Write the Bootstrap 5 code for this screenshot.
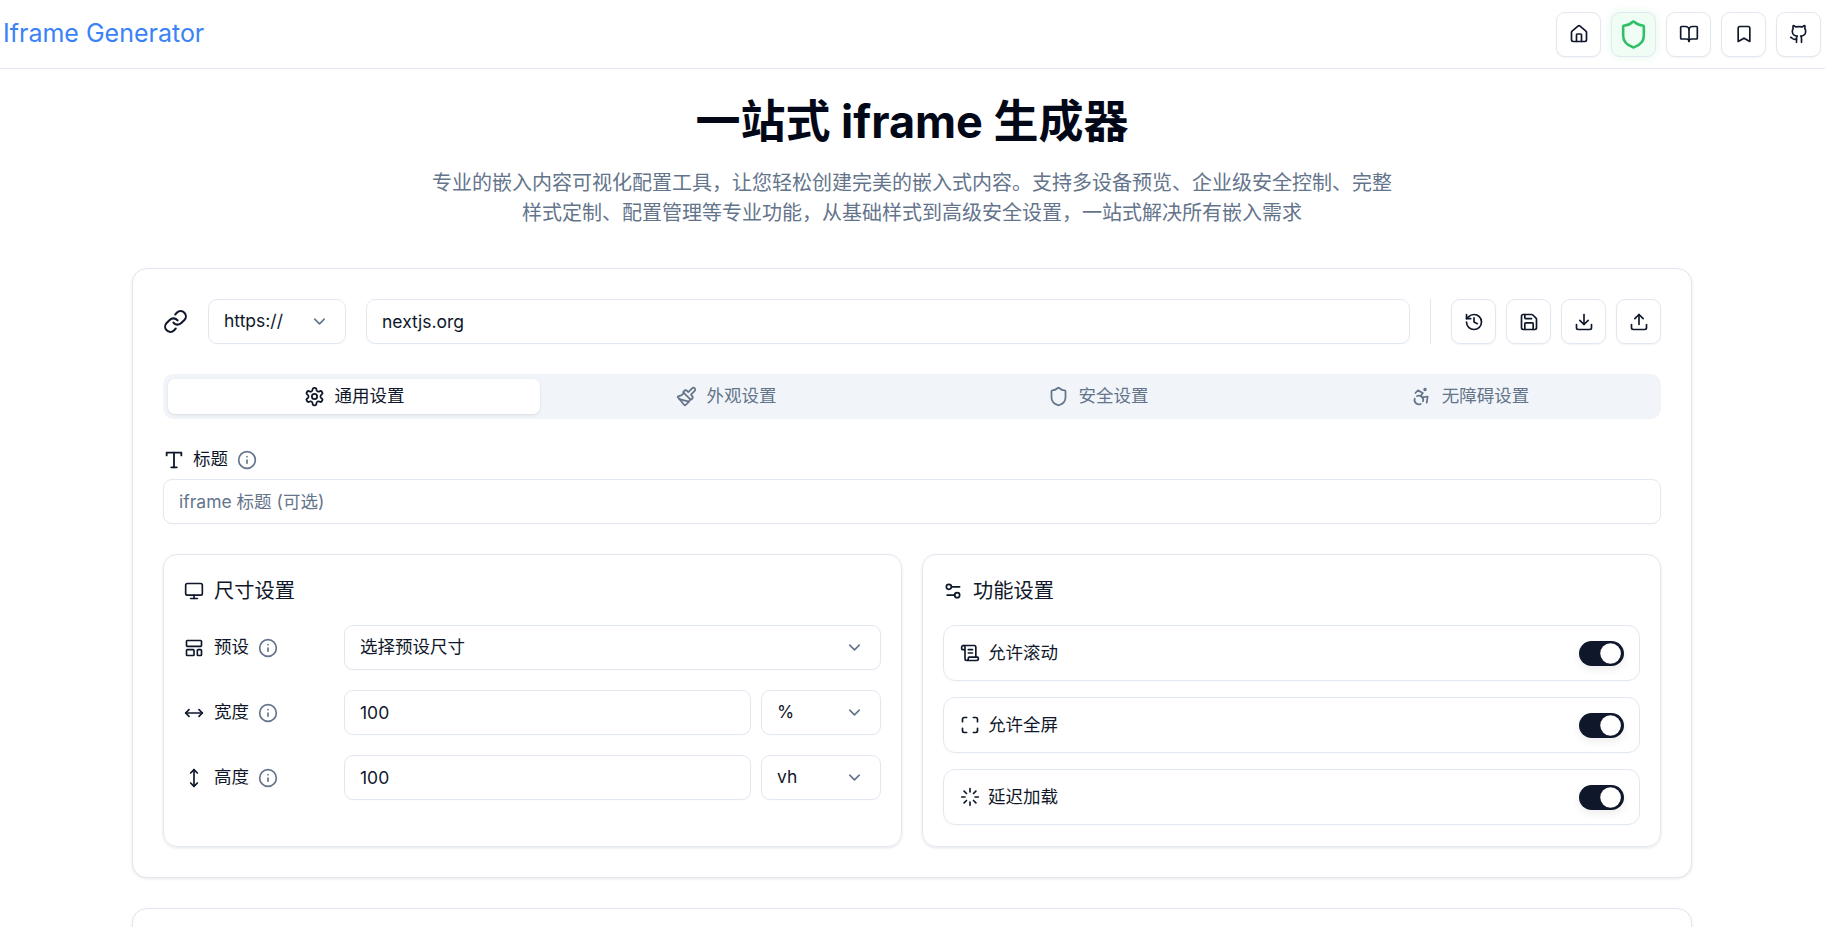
<!DOCTYPE html>
<html lang="zh-CN">
<head>
    <meta charset="UTF-8">
    <meta name="viewport" content="width=device-width, initial-scale=1.0">
    <title>Iframe Generator</title>
    <link rel="stylesheet" href="https://cdn.jsdelivr.net/npm/bootstrap@5.3.0/dist/css/bootstrap.min.css">
    <style>
        html, body { height: 100%; overflow: hidden; }
        body { font-family: "Inter", "Noto Sans CJK SC", sans-serif; font-size: 17.5px; color: #0f172a; background: #fff; }
        .ico { width: 20px; height: 20px; flex: none; fill: none; stroke: currentColor; stroke-width: 2; stroke-linecap: round; stroke-linejoin: round; }
        .ico-gap { margin-right: 10px; }
        .ico-tab { width: 21px; height: 21px; }
        .ico-md { width: 22px; height: 22px; }
        .ico-link { width: 25px; height: 25px; }
        .ico-shield { width: 31px; height: 31px; color: #2fbf67; }
        .ico-info { width: 20px; height: 20px; margin-left: 9px; color: #64748b; }

        .top-bar { height: 69px; padding: 0 4px 0 3px; background: #fff; border-bottom: 1px solid #e2e8f0; }
        .brand-name { font-size: 25px; color: #3b82f6; padding: 0; margin: 0; }
        .icon-row { gap: 10px; }
        .icon-btn { width: 45px; height: 45px; padding: 0; flex: none; display: flex; align-items: center; justify-content: center; color: #0f172a; background: #fff; border: 1px solid #e2e8f0; border-radius: 9px; box-shadow: 0 1px 2px rgba(0,0,0,.05); }
        .icon-btn-safe { background: #f0fdf4; box-shadow: 0 0 10px rgba(34,197,94,.12); }

        .page-wrap { width: 1560px; margin: 0 0 0 132px; }
        .page-head { padding-top: 23px; margin-bottom: 40px; }
        .page-head h1 { font-size: 45px; line-height: 60px; font-weight: 700; color: #020817; margin-bottom: 16px; }
        .page-head p { width: 972px; margin: 0 auto; font-size: 20px; line-height: 30px; color: #64748b; }

        .panel { border: 1px solid #e2e8f0; border-radius: 15px; padding: 30px; background: #fff; box-shadow: 0 1px 3px rgba(0,0,0,.1); margin-bottom: 30px; }
        .panel-next { height: 200px; }
        .url-row { gap: 20px; }
        .url-scheme { width: 138px; flex: none; }
        .url-div { width: 1px; height: 45px; background: #e2e8f0; flex: none; }

        .form-control, .form-select { height: 45px; font-size: 17.5px; color: #0f172a; border: 1px solid #e2e8f0; border-radius: 9px; padding: 0 15px; box-shadow: 0 1px 2px rgba(0,0,0,.02); }
        .form-control::placeholder { color: #64748b; }
        .form-select { background-image: url("data:image/svg+xml,%3csvg xmlns='http://www.w3.org/2000/svg' viewBox='0 0 24 24' fill='none' stroke='%2364748b' stroke-width='2' stroke-linecap='round' stroke-linejoin='round'%3e%3cpath d='m6 9 6 6 6-6'/%3e%3c/svg%3e"); background-size: 19px 19px; background-position: right 16px center; }

        .tab-strip { height: 45px; padding: 5px; margin: 30px 0 27px; background: #f1f5f9; border-radius: 10px; }
        .tab-strip .nav-link { height: 35px; display: flex; align-items: center; justify-content: center; gap: 10px; padding: 0; font-size: 17.5px; color: #64748b; border-radius: 7px; }
        .tab-strip .nav-link.active { background: #fff; color: #0f172a; box-shadow: 0 1px 3px rgba(0,0,0,.1); }

        .field-label { height: 27px; margin-bottom: 6px; }
        .inner-row { --bs-gutter-x: 20px; margin-top: 30px; }
        .sub-panel { height: 293px; border: 1px solid #e2e8f0; border-radius: 14px; padding: 22px 20px; box-shadow: 0 1px 3px rgba(0,0,0,.1); }
        .sub-title { height: 28px; margin-bottom: 20px; font-size: 20.25px; }
        .size-rows { gap: 20px; }
        .size-label { width: 150px; flex: none; }
        .size-label-first { width: 160px; }
        .unit-row { gap: 10px; }
        .unit-select { width: 120px; flex: none; }
        .feature-row { height: 56px; padding: 0 15px 0 16px; border: 1px solid #e2e8f0; border-radius: 12px; box-shadow: 0 1px 2px rgba(0,0,0,.02); }

        .form-switch { padding: 0; margin: 0; min-height: 0; height: 25px; }
        .form-switch .form-check-input { width: 45px; height: 25px; margin: 0; border: none; background-color: #0f172a; background-image: url("data:image/svg+xml,%3csvg xmlns='http://www.w3.org/2000/svg' viewBox='-4 -4 8 8'%3e%3ccircle cx='-.3' r='3.3' fill='%23fff'/%3e%3c/svg%3e"); background-position: right center; box-shadow: 0 4px 8px rgba(0,0,0,.07); }
    </style>
</head>
<body>
    <!-- lucide style icons used all over the page -->
    <svg width="0" height="0" class="position-absolute">
        <symbol id="i-home" viewBox="0 0 24 24"><path d="M15 21v-8a1 1 0 0 0-1-1h-4a1 1 0 0 0-1 1v8"/><path d="M3 10a2 2 0 0 1 .709-1.528l7-5.999a2 2 0 0 1 2.582 0l7 5.999A2 2 0 0 1 21 10v9a2 2 0 0 1-2 2H5a2 2 0 0 1-2-2z"/></symbol>
        <symbol id="i-shield" viewBox="0 0 24 24"><path d="M20 13c0 5-3.5 7.5-7.66 8.95a1 1 0 0 1-.67-.01C7.5 20.5 4 18 4 13V6a1 1 0 0 1 1-1c2 0 4.5-1.2 6.24-2.72a1.17 1.17 0 0 1 1.52 0C14.51 3.81 17 5 19 5a1 1 0 0 1 1 1z"/></symbol>
        <symbol id="i-book" viewBox="0 0 24 24"><path d="M12 7v14"/><path d="M3 18a1 1 0 0 1-1-1V4a1 1 0 0 1 1-1h5a4 4 0 0 1 4 4 4 4 0 0 1 4-4h5a1 1 0 0 1 1 1v13a1 1 0 0 1-1 1h-6a3 3 0 0 0-3 3 3 3 0 0 0-3-3z"/></symbol>
        <symbol id="i-bookmark" viewBox="0 0 24 24"><path d="m19 21-7-4-7 4V5a2 2 0 0 1 2-2h10a2 2 0 0 1 2 2v16z"/></symbol>
        <symbol id="i-github" viewBox="0 0 24 24"><path d="M15 22v-4a4.8 4.8 0 0 0-1-3.5c3 0 6-2 6-5.5.08-1.25-.27-2.48-1-3.5.28-1.15.28-2.35 0-3.5 0 0-1 0-3 1.5-2.64-.5-5.36-.5-8 0C6 2 5 2 5 2c-.3 1.15-.3 2.35 0 3.5A5.403 5.403 0 0 0 4 9c0 3.5 3 5.5 6 5.5-.39.49-.68 1.05-.85 1.65-.17.6-.22 1.23-.15 1.85v4"/><path d="M9 18c-4.51 2-5-2-7-2"/></symbol>
        <symbol id="i-link" viewBox="0 0 24 24"><path d="M10 13a5 5 0 0 0 7.54.54l3-3a5 5 0 0 0-7.07-7.07l-1.72 1.71"/><path d="M14 11a5 5 0 0 0-7.54-.54l-3 3a5 5 0 0 0 7.07 7.07l1.71-1.71"/></symbol>
        <symbol id="i-history" viewBox="0 0 24 24"><path d="M3 12a9 9 0 1 0 9-9 9.75 9.75 0 0 0-6.74 2.74L3 8"/><path d="M3 3v5h5"/><path d="M12 7v5l4 2"/></symbol>
        <symbol id="i-save" viewBox="0 0 24 24"><path d="M15.2 3a2 2 0 0 1 1.4.6l3.8 3.8a2 2 0 0 1 .6 1.4V19a2 2 0 0 1-2 2H5a2 2 0 0 1-2-2V5a2 2 0 0 1 2-2z"/><path d="M17 21v-7a1 1 0 0 0-1-1H8a1 1 0 0 0-1 1v7"/><path d="M7 3v4a1 1 0 0 0 1 1h7"/></symbol>
        <symbol id="i-download" viewBox="0 0 24 24"><path d="M21 15v4a2 2 0 0 1-2 2H5a2 2 0 0 1-2-2v-4"/><polyline points="7 10 12 15 17 10"/><line x1="12" x2="12" y1="15" y2="3"/></symbol>
        <symbol id="i-upload" viewBox="0 0 24 24"><path d="M21 15v4a2 2 0 0 1-2 2H5a2 2 0 0 1-2-2v-4"/><polyline points="17 8 12 3 7 8"/><line x1="12" x2="12" y1="3" y2="15"/></symbol>
        <symbol id="i-settings" viewBox="0 0 24 24"><path d="M12.22 2h-.44a2 2 0 0 0-2 2v.18a2 2 0 0 1-1 1.73l-.43.25a2 2 0 0 1-2 0l-.15-.08a2 2 0 0 0-2.73.73l-.22.38a2 2 0 0 0 .73 2.73l.15.1a2 2 0 0 1 1 1.72v.51a2 2 0 0 1-1 1.74l-.15.09a2 2 0 0 0-.73 2.73l.22.38a2 2 0 0 0 2.73.73l.15-.08a2 2 0 0 1 2 0l.43.25a2 2 0 0 1 1 1.73V20a2 2 0 0 0 2 2h.44a2 2 0 0 0 2-2v-.18a2 2 0 0 1 1-1.73l.43-.25a2 2 0 0 1 2 0l.15.08a2 2 0 0 0 2.73-.73l.22-.39a2 2 0 0 0-.73-2.73l-.15-.08a2 2 0 0 1-1-1.74v-.5a2 2 0 0 1 1-1.74l.15-.09a2 2 0 0 0 .73-2.73l-.22-.38a2 2 0 0 0-2.73-.73l-.15.08a2 2 0 0 1-2 0l-.43-.25a2 2 0 0 1-1-1.73V4a2 2 0 0 0-2-2z"/><circle cx="12" cy="12" r="3"/></symbol>
        <symbol id="i-brush" viewBox="0 0 24 24"><path d="m14.622 17.897-10.68-2.913"/><path d="M18.376 2.622a1 1 0 1 1 3.002 3.002L17.36 9.643a.5.5 0 0 0 0 .707l.944.944a2.41 2.41 0 0 1 0 3.408l-.944.944a.5.5 0 0 1-.707 0L8.354 7.348a.5.5 0 0 1 0-.707l.944-.944a2.41 2.41 0 0 1 3.408 0l.944.944a.5.5 0 0 0 .707 0z"/><path d="M9 8c-1.804 2.71-3.97 3.46-6.583 3.948a.507.507 0 0 0-.302.819l7.32 8.883a1 1 0 0 0 1.185.204C12.735 20.405 16 16.792 16 15"/></symbol>
        <symbol id="i-access" viewBox="0 0 24 24"><circle cx="16" cy="4" r="1"/><path d="m18 19 1-7-6 1"/><path d="m5 8 3-3 5.5 3-2.36 3.5"/><path d="M4.24 14.5a5 5 0 0 0 6.88 6"/><path d="M13.76 17.5a5 5 0 0 0-6.88-6"/></symbol>
        <symbol id="i-type" viewBox="0 0 24 24"><polyline points="4 7 4 4 20 4 20 7"/><line x1="9" x2="15" y1="20" y2="20"/><line x1="12" x2="12" y1="4" y2="20"/></symbol>
        <symbol id="i-info" viewBox="0 0 24 24"><circle cx="12" cy="12" r="10"/><path d="M12 16v-4"/><path d="M12 8h.01"/></symbol>
        <symbol id="i-monitor" viewBox="0 0 24 24"><rect width="20" height="14" x="2" y="3" rx="2"/><line x1="8" x2="16" y1="21" y2="21"/><line x1="12" x2="12" y1="17" y2="21"/></symbol>
        <symbol id="i-sliders" viewBox="0 0 24 24"><path d="M20 7h-9"/><path d="M14 17H5"/><circle cx="17" cy="17" r="3"/><circle cx="7" cy="7" r="3"/></symbol>
        <symbol id="i-layout" viewBox="0 0 24 24"><rect width="18" height="7" x="3" y="3" rx="1"/><rect width="9" height="7" x="3" y="14" rx="1"/><rect width="5" height="7" x="16" y="14" rx="1"/></symbol>
        <symbol id="i-moveh" viewBox="0 0 24 24"><path d="m18 8 4 4-4 4"/><path d="M2 12h20"/><path d="m6 8-4 4 4 4"/></symbol>
        <symbol id="i-movev" viewBox="0 0 24 24"><path d="M12 2v20"/><path d="m8 18 4 4 4-4"/><path d="m8 6 4-4 4 4"/></symbol>
        <symbol id="i-scroll" viewBox="0 0 24 24"><path d="M15 12h-5"/><path d="M15 8h-5"/><path d="M19 17V5a2 2 0 0 0-2-2H4"/><path d="M8 21h12a2 2 0 0 0 2-2v-1a1 1 0 0 0-1-1H11a1 1 0 0 0-1 1v1a2 2 0 1 1-4 0V5a2 2 0 1 0-4 0v2a1 1 0 0 0 1 1h3"/></symbol>
        <symbol id="i-maximize" viewBox="0 0 24 24"><path d="M8 3H5a2 2 0 0 0-2 2v3"/><path d="M21 8V5a2 2 0 0 0-2-2h-3"/><path d="M3 16v3a2 2 0 0 0 2 2h3"/><path d="M16 21h3a2 2 0 0 0 2-2v-3"/></symbol>
        <symbol id="i-loader" viewBox="0 0 24 24"><path d="M12 2v4"/><path d="m16.2 7.8 2.9-2.9"/><path d="M18 12h4"/><path d="m16.2 16.2 2.9 2.9"/><path d="M12 18v4"/><path d="m4.9 19.1 2.9-2.9"/><path d="M2 12h4"/><path d="m4.9 4.9 2.9 2.9"/></symbol>
    </svg>

    <!-- Top bar -->
    <nav class="navbar top-bar d-flex justify-content-between align-items-center flex-nowrap">
        <a class="navbar-brand brand-name" href="#">Iframe Generator</a>
        <div class="d-flex icon-row">
            <button class="icon-btn"><svg class="ico"><use href="#i-home"/></svg></button>
            <button class="icon-btn icon-btn-safe"><svg class="ico ico-shield"><use href="#i-shield"/></svg></button>
            <button class="icon-btn"><svg class="ico"><use href="#i-book"/></svg></button>
            <button class="icon-btn"><svg class="ico"><use href="#i-bookmark"/></svg></button>
            <button class="icon-btn"><svg class="ico"><use href="#i-github"/></svg></button>
        </div>
    </nav>

    <main class="page-wrap">
        <div class="page-head text-center">
            <h1>一站式 iframe 生成器</h1>
            <p>专业的嵌入内容可视化配置工具，让您轻松创建完美的嵌入式内容。支持多设备预览、企业级安全控制、完整样式定制、配置管理等专业功能，从基础样式到高级安全设置，一站式解决所有嵌入需求</p>
        </div>

        <section class="panel">
            <!-- URL row -->
            <div class="d-flex align-items-center url-row">
                <svg class="ico ico-link"><use href="#i-link"/></svg>
                <select class="form-select url-scheme"><option>https://</option></select>
                <input type="text" class="form-control" value="nextjs.org">
                <div class="url-div"></div>
                <div class="d-flex icon-row">
                    <button class="icon-btn"><svg class="ico"><use href="#i-history"/></svg></button>
                    <button class="icon-btn"><svg class="ico"><use href="#i-save"/></svg></button>
                    <button class="icon-btn"><svg class="ico"><use href="#i-download"/></svg></button>
                    <button class="icon-btn"><svg class="ico"><use href="#i-upload"/></svg></button>
                </div>
            </div>

            <!-- Tabs -->
            <ul class="nav nav-justified tab-strip">
                <li class="nav-item"><a class="nav-link active" href="#"><svg class="ico ico-tab"><use href="#i-settings"/></svg>通用设置</a></li>
                <li class="nav-item"><a class="nav-link" href="#"><svg class="ico ico-tab"><use href="#i-brush"/></svg>外观设置</a></li>
                <li class="nav-item"><a class="nav-link" href="#"><svg class="ico ico-tab"><use href="#i-shield"/></svg>安全设置</a></li>
                <li class="nav-item"><a class="nav-link" href="#"><svg class="ico ico-tab"><use href="#i-access"/></svg>无障碍设置</a></li>
            </ul>

            <!-- Title -->
            <div class="field-label d-flex align-items-center">
                <svg class="ico ico-md me-2"><use href="#i-type"/></svg>
                <span>标题</span>
                <svg class="ico ico-info"><use href="#i-info"/></svg>
            </div>
            <input type="text" class="form-control" placeholder="iframe 标题 (可选)">

            <div class="row inner-row">
                <!-- Size settings -->
                <div class="col-6">
                    <div class="sub-panel">
                        <div class="sub-title d-flex align-items-center"><svg class="ico ico-gap"><use href="#i-monitor"/></svg>尺寸设置</div>
                        <div class="d-flex flex-column size-rows">
                            <div class="d-flex align-items-center">
                                <div class="size-label size-label-first d-flex align-items-center"><svg class="ico ico-gap"><use href="#i-layout"/></svg>预设<svg class="ico ico-info"><use href="#i-info"/></svg></div>
                                <select class="form-select"><option>选择预设尺寸</option></select>
                            </div>
                            <div class="d-flex align-items-center unit-row">
                                <div class="size-label d-flex align-items-center"><svg class="ico ico-gap"><use href="#i-moveh"/></svg>宽度<svg class="ico ico-info"><use href="#i-info"/></svg></div>
                                <input type="text" class="form-control" value="100">
                                <select class="form-select unit-select"><option>%</option></select>
                            </div>
                            <div class="d-flex align-items-center unit-row">
                                <div class="size-label d-flex align-items-center"><svg class="ico ico-gap"><use href="#i-movev"/></svg>高度<svg class="ico ico-info"><use href="#i-info"/></svg></div>
                                <input type="text" class="form-control" value="100">
                                <select class="form-select unit-select"><option>vh</option></select>
                            </div>
                        </div>
                    </div>
                </div>

                <!-- Feature settings -->
                <div class="col-6">
                    <div class="sub-panel">
                        <div class="sub-title d-flex align-items-center"><svg class="ico ico-gap"><use href="#i-sliders"/></svg>功能设置</div>
                        <div class="d-flex flex-column gap-3">
                            <div class="feature-row d-flex align-items-center justify-content-between">
                                <span class="d-flex align-items-center"><svg class="ico me-2"><use href="#i-scroll"/></svg>允许滚动</span>
                                <div class="form-check form-switch"><input class="form-check-input" type="checkbox" checked></div>
                            </div>
                            <div class="feature-row d-flex align-items-center justify-content-between">
                                <span class="d-flex align-items-center"><svg class="ico me-2"><use href="#i-maximize"/></svg>允许全屏</span>
                                <div class="form-check form-switch"><input class="form-check-input" type="checkbox" checked></div>
                            </div>
                            <div class="feature-row d-flex align-items-center justify-content-between">
                                <span class="d-flex align-items-center"><svg class="ico me-2"><use href="#i-loader"/></svg>延迟加载</span>
                                <div class="form-check form-switch"><input class="form-check-input" type="checkbox" checked></div>
                            </div>
                        </div>
                    </div>
                </div>
            </div>
        </section>

        <section class="panel panel-next"></section>
    </main>

    <script src="https://cdn.jsdelivr.net/npm/bootstrap@5.3.0/dist/js/bootstrap.bundle.min.js"></script>
</body>
</html>
